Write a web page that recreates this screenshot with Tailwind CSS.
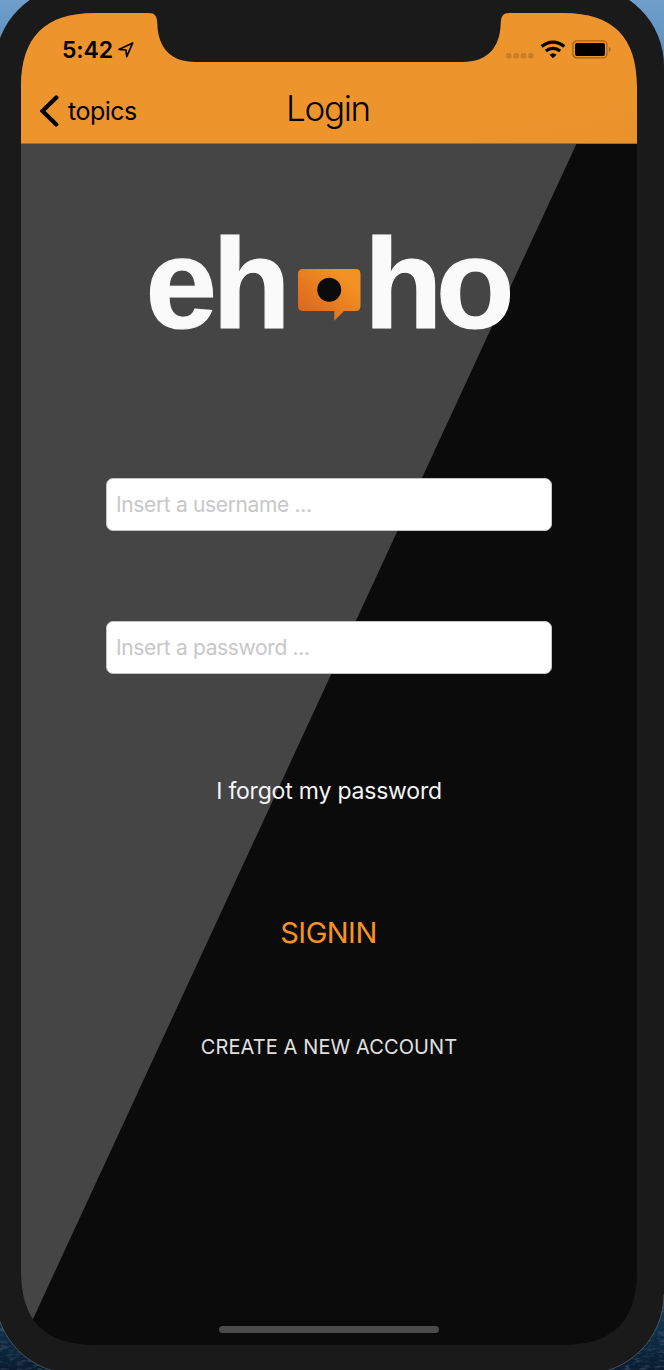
<!DOCTYPE html>
<html lang="en">
<head>
<meta charset="utf-8">
<title>Login</title>
<script src="https://cdn.jsdelivr.net/npm/@tailwindcss/browser@4"></script>
</head>
<body class="w-[664px] h-[1370px] overflow-hidden bg-[#0a1c2e] font-['Inter',sans-serif]">
<div class="relative w-[664px] h-[1370px] overflow-hidden pt-[13px] pl-[21px]">
  <!-- desktop behind the phone, and the phone body -->
  <svg class="absolute inset-0" width="664" height="1370" viewBox="0 0 664 1370">
    <defs>
      <linearGradient id="sky" x1="0" y1="0" x2="0" y2="1"><stop offset="0" stop-color="#6f9fca"/><stop offset="1" stop-color="#4f86b8"/></linearGradient>
      <linearGradient id="sea" x1="0" y1="0" x2="0" y2="1"><stop offset="0" stop-color="#1f4560"/><stop offset=".5" stop-color="#10304a"/><stop offset="1" stop-color="#0a1c30"/></linearGradient>
      <filter id="grain"><feTurbulence type="fractalNoise" baseFrequency=".12 .35" numOctaves="3" seed="4"/><feColorMatrix values="0 0 0 0 .35  0 0 0 0 .5  0 0 0 0 .6  1.6 0 0 0 -.75"/></filter>
    </defs>
    <rect width="664" height="100" fill="url(#sky)"/>
    <rect y="1285" width="664" height="85" fill="url(#sea)"/>
    <rect y="1285" width="664" height="85" filter="url(#grain)" opacity=".4"/>
    <rect x="-5" y="-14" width="669" height="1388" rx="80" fill="#1a1a1a"/>
    <path d="M-5 1294A80 80 0 0 0 75 1374H584A80 80 0 0 0 664 1294" fill="none" stroke="#56626c" stroke-opacity=".75"/>
    <clipPath id="screen"><path d="M0 74C0 24 24 0 74 0H127C134 0 136 3 136.300 11C137 35 150 49 174 49H442C466 49 479 35 479.700 11C480 3 482 0 489 0H542C592 0 616 24 616 74V1258C616 1308 592 1332 542 1332H74C24 1332 0 1308 0 1258Z"/></clipPath>
  </svg>

  <main class="relative w-[616px] h-[1332px] flex flex-col bg-[#0b0b0b] [clip-path:url(#screen)]">
    <svg class="absolute inset-0" width="616" height="1332" viewBox="0 0 616 1332"><path d="M0 0H616L12 1306L0 1332Z" fill="#454545"/></svg>

    <header class="relative h-[131px] shrink-0 border-b border-[#a96a20] bg-linear-to-br from-[#ed952c] from-75% to-[#e8922c]">
      <div class="h-[73px] flex justify-between pl-[41px] pr-[26px]">
        <div class="flex items-center gap-[5px] text-black">
          <span class="mt-[2px] text-[23px] font-semibold tracking-[-0.1px] leading-none">5:42</span>
          <svg width="16" height="16" viewBox="0 0 16 16" fill="none" stroke="#000" stroke-width="1.700" stroke-linejoin="round"><path d="M14.700 1L1 7.400L8 8L8.700 14.700Z"/></svg>
        </div>
        <div class="flex items-center">
          <svg width="28" height="6" viewBox="0 0 28 6" class="mt-[12px]" fill="#c87d26"><rect width="5.400" height="5.400" rx="2"/><rect x="7.400" width="5.400" height="5.400" rx="2"/><rect x="14.800" width="5.400" height="5.400" rx="2"/><rect x="22.200" width="5.400" height="5.400" rx="2"/></svg>
          <svg width="26" height="19" viewBox="0 0 26 19" class="ml-[6px]" fill="none" stroke="#000"><path d="M1.700 6.600Q7 2.100 13 2.100T24.300 6.600" stroke-width="3.300"/><path d="M5.900 11.100Q9 8.400 13 8.400T20.100 11.100" stroke-width="3.300"/><path d="M9.500 14.700Q13 11.700 16.500 14.700L13 18.300Z" fill="#000" stroke="none"/></svg>
          <svg width="39" height="19" viewBox="0 0 39 19" class="ml-[6px]"><rect x=".9" y=".9" width="34" height="17" rx="4" fill="none" stroke="#9e641d" stroke-width="1.300"/><rect x="3" y="3" width="30" height="13" rx="2" fill="#000"/><path d="M36.800 6.500Q38.700 7.500 38.700 9.500T36.800 12.500Z" fill="#a8691e"/></svg>
        </div>
      </div>
      <div class="h-[57px] grid grid-cols-3 pl-[19px] pr-[19px] text-black">
        <a class="flex items-start gap-[9px]">
          <svg width="19" height="32" viewBox="0 0 19 32" class="mt-[9px]" fill="none" stroke="#000" stroke-width="4.200" stroke-linecap="round" stroke-linejoin="miter"><path d="M16.300 2.400L2.500 16L16.300 29.400"/></svg>
          <span class="mt-[9px] text-[25px] leading-[32px] tracking-[-0.5px]">topics</span>
        </a>
        <h1 class="pr-[2px] text-center text-[35px] font-light leading-[44px] tracking-[-1.3px]">Login</h1>
      </div>
    </header>

    <section class="relative flex flex-col items-center">
      <svg class="mt-[61px] ml-[2px]" width="380" height="150" viewBox="140 205 380 150">
        <defs><linearGradient id="bubble" x1="0" y1="1" x2="1" y2="0"><stop offset="0" stop-color="#d95f1c"/><stop offset=".8" stop-color="#f39224"/></linearGradient></defs>
        <g fill="#fafafa" stroke="#fafafa" stroke-width="1.200" font-family="Liberation Sans" font-weight="700" font-size="128.500">
          <text x="145.600 212.200" y="327.500">eh</text>
          <text x="363.900 436" y="327.500">ho</text>
        </g>
        <path d="M303 269H355.500Q360.500 269 360.500 274V306Q360.500 311 355.500 311H344L334.300 320.700V311H303Q298 311 298 306V274Q298 269 303 269Z" fill="url(#bubble)"/>
        <circle cx="329.200" cy="289.800" r="12" fill="#0b0b0b"/>
      </svg>
      <input type="text" placeholder="Insert a username ..." class="mt-[123px] w-[446px] h-[53px] rounded-[7px] border border-[#c4c4c4] bg-white px-[9px] text-[21px] tracking-[-0.35px] placeholder:text-[#c7c7c9]">
      <input type="text" placeholder="Insert a password ..." class="mt-[90px] w-[446px] h-[53px] rounded-[7px] border border-[#c4c4c4] bg-white px-[9px] text-[21px] tracking-[-0.35px] placeholder:text-[#c7c7c9]">
      <a class="mt-[101px] text-[23px] leading-[32px] tracking-[-0.2px] text-[#f5f5f5]">I forgot my password</a>
      <button class="mt-[106px] pr-[1px] text-[29px] leading-[40px] tracking-[-0.5px] text-[#f8931f]">SIGNIN</button>
      <a class="mt-[78px] text-[20px] leading-[32px] tracking-[0.1px] text-[#e0e0e0]">CREATE A NEW ACCOUNT</a>
    </section>
    <div class="relative mt-auto mb-[12px] mx-auto w-[220px] h-[7px] rounded-full bg-[#4b4b4b]"></div>
  </main>
</div>
</body>
</html>
